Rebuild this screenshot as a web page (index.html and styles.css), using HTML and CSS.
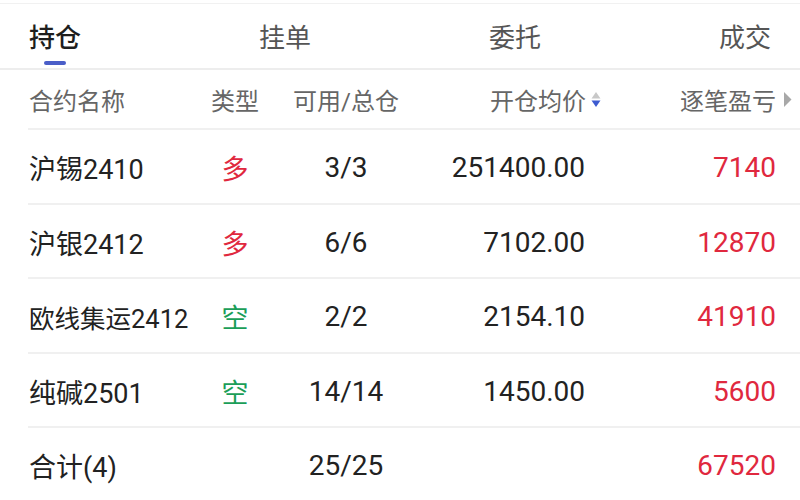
FILE: index.html
```html
<!DOCTYPE html>
<html lang="zh-CN">
<head>
<meta charset="utf-8">
<link rel="stylesheet" href="styles.css">
</head>
<body>
<div class="page">
  <div class="tabs">
    <div class="tab active"><span class="tab-label">持仓</span><span class="tab-bar"></span></div>
    <div class="tab"><span class="tab-label">挂单</span><span class="tab-bar"></span></div>
    <div class="tab"><span class="tab-label">委托</span><span class="tab-bar"></span></div>
    <div class="tab"><span class="tab-label">成交</span><span class="tab-bar"></span></div>
  </div>
  <div class="table">
    <div class="row head">
      <div class="c1">合约名称</div>
      <div class="c2">类型</div>
      <div class="c3">可用/总仓</div>
      <div class="c4"><span>开仓均价</span><svg class="sort" width="10" height="17" viewBox="0 0 10 17"><path d="M5 1 L9.5 7.5 L0.5 7.5 Z" fill="#c8c8c8"/><path d="M0.5 9.5 L9.5 9.5 L5 16 Z" fill="#3d5bd0"/></svg></div>
      <div class="c5"><span>逐笔盈亏</span><svg class="more" width="9" height="17" viewBox="0 0 9 17"><path d="M1 1 L8.5 8.5 L1 16 Z" fill="#a8a8a8"/></svg></div>
    </div>
    <div class="row">
      <div class="c1">沪锡2410</div>
      <div class="c2 long">多</div>
      <div class="c3">3/3</div>
      <div class="c4 num">251400.00</div>
      <div class="c5 num profit">7140</div>
    </div>
    <div class="row">
      <div class="c1">沪银2412</div>
      <div class="c2 long">多</div>
      <div class="c3">6/6</div>
      <div class="c4 num">7102.00</div>
      <div class="c5 num profit">12870</div>
    </div>
    <div class="row">
      <div class="c1 fit">欧线集运2412</div>
      <div class="c2 short">空</div>
      <div class="c3">2/2</div>
      <div class="c4 num">2154.10</div>
      <div class="c5 num profit">41910</div>
    </div>
    <div class="row">
      <div class="c1">纯碱2501</div>
      <div class="c2 short">空</div>
      <div class="c3">14/14</div>
      <div class="c4 num">1450.00</div>
      <div class="c5 num profit">5600</div>
    </div>
    <div class="row total">
      <div class="c1">合计(4)</div>
      <div class="c2"></div>
      <div class="c3">25/25</div>
      <div class="c4 num"></div>
      <div class="c5 num profit">67520</div>
    </div>
  </div>
</div>
</body>
</html>
```
FILE: styles.css
```css
html, body {
  margin: 0;
  padding: 0;
  background: #ffffff;
}
body {
  font-family: Roboto, "Noto Sans CJK SC", sans-serif;
  font-variant-numeric: tabular-nums;
  color: #222222;
  width: 800px;
  height: 500px;
  overflow: hidden;
}
.page {
  padding-top: 3px;
}
.tabs {
  display: flex;
  justify-content: space-between;
  padding: 17px 29px 3px 29px;
  border-top: 1px solid #f1f1f1;
  border-bottom: 2px solid #ededed;
}
.tab {
  display: flex;
  flex-direction: column;
  align-items: center;
}
.tab-label {
  font-size: 26px;
  line-height: 34px;
  color: #555555;
}
.tab-bar {
  width: 22px;
  height: 4px;
  margin-top: 6px;
  border-radius: 2px;
  background: transparent;
}
.tab.active .tab-label {
  color: #1e1e1e;
  font-weight: 500;
}
.tab.active .tab-bar {
  background: #4a5ec8;
}
.table {
  margin-left: 28px;
}
.row {
  display: grid;
  grid-template-columns: 172px 70px 152px 181px 189px;
  align-items: center;
  height: 69.5px;
  padding-top: 3px;
  border-bottom: 2px solid #f0f0f0;
  font-size: 28px;
}
.row.head {
  height: 58px;
  padding-top: 0;
  font-size: 24px;
  color: #666666;
}
.row.total {
  border-bottom: none;
  height: 69px;
}
.c1 {
  padding-left: 1px;
  white-space: nowrap;
  font-size: 27px;
}
.head .c1 {
  font-size: 24px;
}
.c1.fit {
  font-size: 25.5px;
}
.c2, .c3 {
  text-align: center;
}
.c4, .c5 {
  text-align: right;
  white-space: nowrap;
}
.c4.num {
  padding-right: 18px;
}
.c5.num {
  padding-right: 16px;
}
.head .c4, .head .c5 {
  display: flex;
  justify-content: flex-end;
  align-items: center;
}
.head .c4 {
  padding-right: 2px;
}
.head .c5 {
  padding-right: 0;
}
.sort {
  margin-left: 5px;
}
.more {
  margin-left: 7px;
}
.long {
  color: #e0283e;
  font-size: 27px;
}
.short {
  color: #1a9e58;
  font-size: 27px;
}
.profit {
  color: #e0283e;
}
```
